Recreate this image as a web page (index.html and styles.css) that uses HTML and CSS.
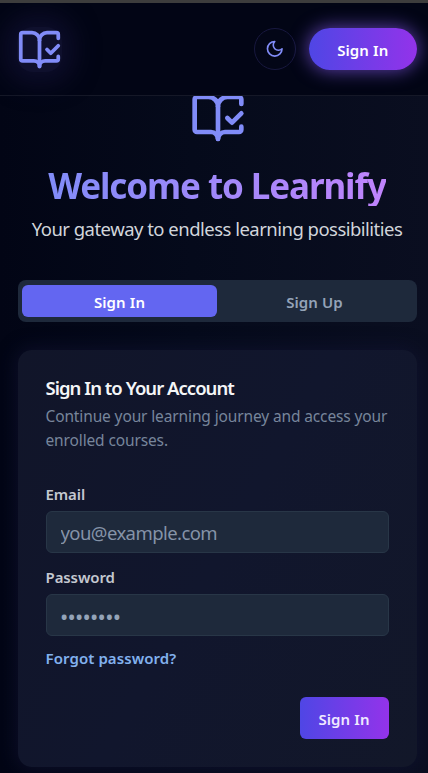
FILE: index.html
```html
<!DOCTYPE html>
<html lang="en">
<head>
<meta charset="utf-8">
<title>Learnify</title>
<link rel="stylesheet" href="styles.css">
</head>
<body>
<svg class="sprite" width="0" height="0">
  <symbol id="book" viewBox="0 0 24 24">
    <path d="M12 21V7"/><path d="m16 12 2 2 4-4"/>
    <path d="M22 6V4a1 1 0 0 0-1-1h-5a4 4 0 0 0-4 4 4 4 0 0 0-4-4H3a1 1 0 0 0-1 1v13a1 1 0 0 0 1 1h6a3 3 0 0 1 3 3 3 3 0 0 1 3-3h6a1 1 0 0 0 1-1v-1.3"/>
  </symbol>
</svg>
<header class="header">
  <a class="logo"><svg class="icon logo-icon"><use href="#book"/></svg></a>
  <div class="actions">
    <button class="theme"><svg class="icon moon" viewBox="0 0 24 24"><path d="M12 3a6 6 0 0 0 9 9 9 9 0 1 1-9-9Z"/></svg></button>
    <button class="cta"><span class="label">Sign In</span></button>
  </div>
</header>
<main class="main">
  <section class="hero">
    <svg class="icon hero-icon"><use href="#book"/></svg>
    <h1 class="title"><span>Welcome to Learnify</span></h1>
    <p class="subtitle">Your gateway to endless learning possibilities</p>
  </section>
  <div class="tabs">
    <button class="tab active"><span class="label">Sign In</span></button>
    <button class="tab"><span class="label">Sign Up</span></button>
  </div>
  <form class="card">
    <h2 class="card-title">Sign In to Your Account</h2>
    <p class="card-text">Continue your learning journey and access your<br>enrolled courses.</p>
    <label class="field-label email-label" for="email">Email</label>
    <input class="input" id="email" type="email" placeholder="you@example.com">
    <label class="field-label password-label" for="password">Password</label>
    <input class="input password" id="password" type="password" placeholder="••••••••">
    <a class="forgot">Forgot password?</a>
    <div class="card-footer"><button type="button" class="submit"><span class="label">Sign In</span></button></div>
  </form>
</main>
</body>
</html>
```
FILE: styles.css
```css
* { box-sizing: border-box; }
body {
  margin: 0;
  width: 428px;
  height: 773px;
  overflow: hidden;
  display: flex;
  flex-direction: column;
  border-top: 3px solid #3d3d3d;
  background: linear-gradient(90deg, #020515 0%, #050a1b 45%, #0a0e20 100%);
  color: #fff;
  font-family: "Noto Sans", "Open Sans", sans-serif;
}
button { border: 0; padding: 0; font: inherit; color: inherit; display: flex; align-items: center; justify-content: center; }
.sprite { display: block; position: absolute; }
.icon { display: block; fill: none; stroke: #818cf8; stroke-width: 2; stroke-linecap: round; stroke-linejoin: round; }
.label { font-size: 15px; font-weight: 600; line-height: 20px; letter-spacing: .1px; }
.header {
  height: 93px;
  flex: none;
  display: flex;
  align-items: center;
  justify-content: space-between;
  padding: 0 11.5px 0 17.4px;
  border-bottom: 1px solid #151827;
  background: #020515;
  position: relative;
  z-index: 1;
}
.logo { border-radius: 16px; background: #0f102d; box-shadow: 0 0 24px 12px #0d0d2a; }
.logo-icon { width: 45px; height: 45px; }
.actions { display: flex; gap: 13.5px; }
.theme { width: 42px; height: 42px; border: 1px solid #18183f; border-radius: 50%; background: #030617; }
.moon { width: 19.5px; height: 19.5px; }
.cta {
  width: 107.5px;
  height: 42px;
  border-radius: 21px;
  background: linear-gradient(90deg, #4f46e5, #9333ea);
  box-shadow: 0 0 18px 1px rgba(139, 92, 246, .65);
}
.cta .label { padding-top: 1px; }
.main { padding: 0 11.5px 0 17.5px; margin-top: -6.5px; }
.hero { display: flex; flex-direction: column; align-items: center; }
.hero-icon { width: 56px; height: 56px; margin-left: 1px; }
.title { margin: 20.5px 0 0; height: 45px; font-size: 35px; line-height: 40px; font-weight: 700; white-space: nowrap; letter-spacing: -1.1px; }
.title span { display: block; height: 39.5px; color: transparent; background: linear-gradient(90deg, #818cf8, #c084fc); -webkit-background-clip: text; background-clip: text; }
.subtitle { margin: 4px 0 0; font-size: 18.5px; line-height: 28px; color: #d1d5db; white-space: nowrap; letter-spacing: -.52px; }
.tabs { margin-top: 36.5px; height: 42px; display: flex; padding: 5px 4.5px; border-radius: 8px; background: #1e293b; }
.tab { flex: 1; border-radius: 6px; background: none; color: #94a3b8; }
.tab.active { background: #6366f1; color: #fff; }
.tab .label { padding-top: 2px; }
.card {
  margin-top: 28px;
  height: 417px;
  padding: 25px 28px 0;
  border-radius: 14px;
  background: linear-gradient(120deg, #111529, #11162d 50%, #121729);
  box-shadow: 0 0 18px 2px rgba(20, 22, 56, .55);
}
.card-title { margin: 0; font-size: 18.5px; line-height: 26px; font-weight: 600; letter-spacing: -.97px; color: #f4f5f7; }
.card-text { margin: 3px 0 0; font-size: 15.5px; line-height: 24px; color: #77859b; letter-spacing: -.13px; white-space: nowrap; }
.field-label { display: block; font-size: 15px; line-height: 20px; font-weight: 600; color: #c4c8d0; letter-spacing: -.1px; }
.email-label { margin-top: 32px; }
.password-label { margin-top: 14px; }
.input {
  display: block;
  width: 100%;
  height: 42px;
  margin-top: 7px;
  padding: 2px 14px 0;
  border: 1px solid #283647;
  border-radius: 6px;
  background: #1e293b;
  font: 18.5px "Noto Sans", sans-serif;
  letter-spacing: -.57px;
  color: #fff;
}
.input::placeholder { color: #8593a8; opacity: 1; }
.password { font-size: 22px; letter-spacing: -.75px; padding: 3px 13.5px 0; }
.password::placeholder { color: #94a3b8; }
.forgot { display: block; margin-top: 12px; font-size: 15px; line-height: 20px; font-weight: 600; color: #82b1ee; letter-spacing: .08px; }
.card-footer { margin-top: 29px; display: flex; justify-content: flex-end; }
.submit { width: 89px; height: 42px; border-radius: 6px; background: linear-gradient(90deg, #4f46e5, #9333ea); color: #efe9ff; }
.submit .label { padding-top: 3px; }
```
